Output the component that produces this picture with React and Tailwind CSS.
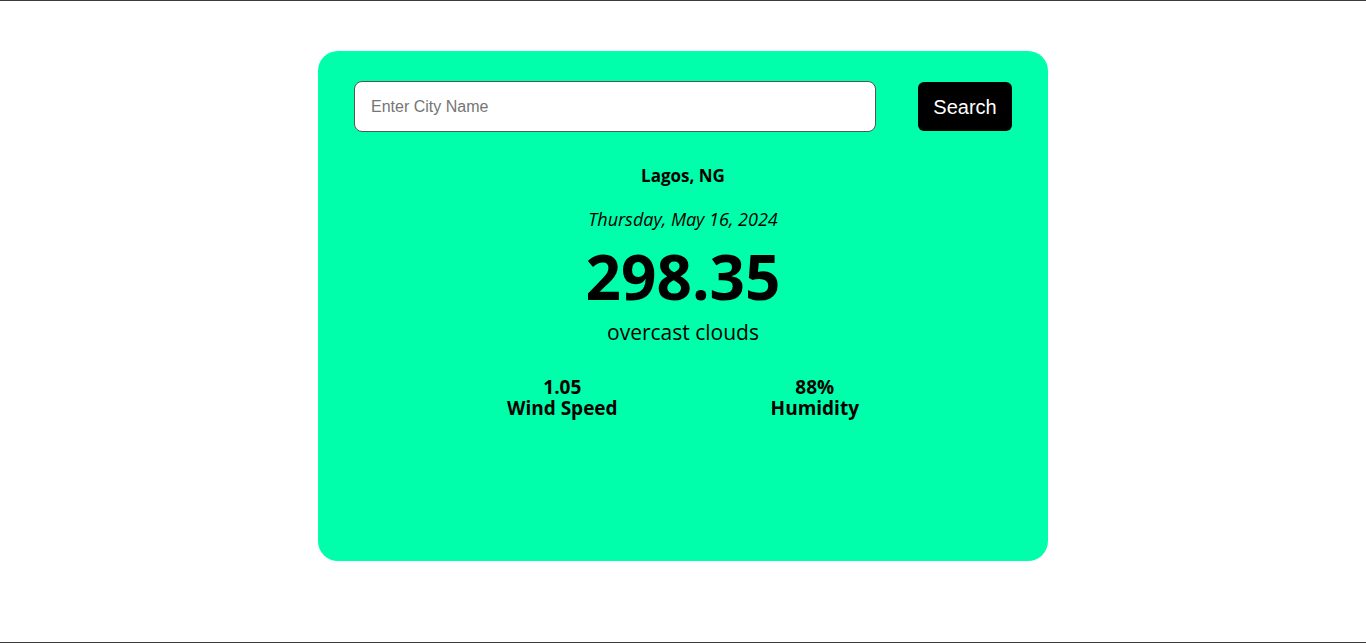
export default function App() {
  return (
    <div className="h-[643px] w-full bg-white border-y border-[#3c3c3c] flex justify-center pt-[50px]" style={{ fontFamily: '"Open Sans", "Noto Sans", sans-serif' }}>
      <div className="w-[730px] h-[510px] rounded-[20px] bg-[#00ffaa] px-9 pt-[30px] flex flex-col items-center">
        <div className="w-full flex items-center justify-between">
          <input
            type="text"
            placeholder="Enter City Name"
            className="w-[522px] h-[51px] rounded-lg border border-[#555] bg-white px-4 text-base text-black placeholder:text-[#757575] outline-none"
            style={{ fontFamily: '"Liberation Sans", Arial, sans-serif' }}
          />
          <button
            type="button"
            className="w-[94px] h-[49px] rounded-md bg-black text-white text-xl leading-none"
            style={{ fontFamily: '"Liberation Sans", Arial, sans-serif' }}
          >
            Search
          </button>
        </div>

        <h2 className="mt-[32px] text-[17px] font-bold leading-6 text-black">Lagos, NG</h2>
        <p className="mt-[19px] text-[18px] italic leading-6 text-black">Thursday, May 16, 2024</p>
        <h1 className="mt-[14px] text-[62px] font-bold leading-[62px] text-black">298.35</h1>
        <p className="mt-[11px] text-[21px] leading-7 text-black">overcast clouds</p>

        <div className="mt-[31px] flex justify-center gap-[153px] text-[19px] font-bold leading-[21px] text-black text-center">
          <div className="flex flex-col">
            <span>1.05</span>
            <span>Wind Speed</span>
          </div>
          <div className="flex flex-col">
            <span>88%</span>
            <span>Humidity</span>
          </div>
        </div>
      </div>
    </div>
  );
}
